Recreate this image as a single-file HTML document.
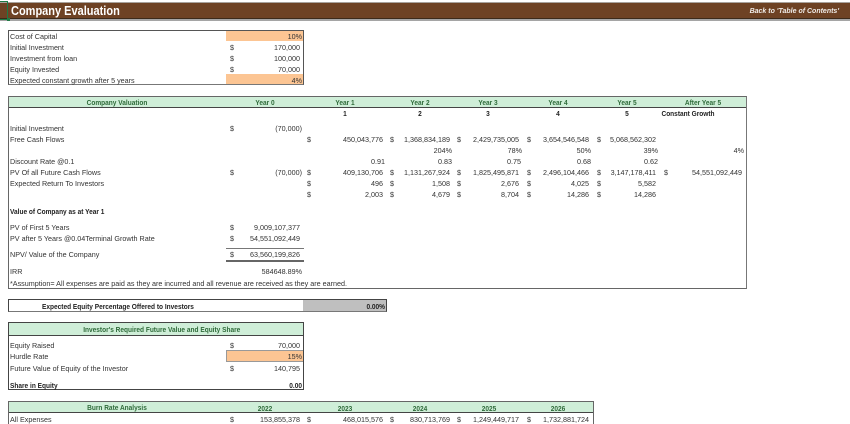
<!DOCTYPE html>
<html><head><meta charset="utf-8"><style>
html,body{margin:0;padding:0;background:#fff}
#p{position:relative;width:850px;height:424px;overflow:hidden;background:#fff;font-family:"Liberation Sans",sans-serif;font-size:7.2px;color:#333}
.t,.r,.c,.b{position:absolute;white-space:nowrap;line-height:10px;height:10px}
.r{text-align:right;width:100px}
.c{text-align:center;width:120px}
.b{background:none}
.g{color:#2f6b3a;font-weight:bold;font-size:7.2px;transform:scaleX(.91)}
.k{font-weight:bold;color:#222;font-size:7.2px;transform:scaleX(.91)}
.t.k{transform-origin:left center}
.r.k{transform-origin:right center}
.x{position:absolute;box-sizing:border-box}
#txt{position:absolute;left:0;top:1px;width:850px;height:424px;filter:blur(.3px)}
</style></head><body><div id="p">
<!-- title bar -->
<div class="x" style="left:0;top:2px;width:850px;height:1px;background:#a8a29c"></div>
<div class="x" style="left:0;top:3px;width:850px;height:15px;background:#6e4224"></div>
<div class="x" style="left:0;top:18px;width:850px;height:1px;background:#3d2a1a"></div>
<div class="x" style="left:0;top:19px;width:850px;height:2px;background:#a5a5a5"></div>
<div class="x" style="left:-2px;top:1px;width:10px;height:19px;border:1px solid #1f7a45"></div>
<div class="x" style="left:7px;top:18px;width:3px;height:3px;background:#1f7a45"></div>

<!-- box 1 -->
<div class="x" style="left:226px;top:30px;width:77px;height:11px;background:#fcc593"></div>
<div class="x" style="left:226px;top:74px;width:77px;height:11px;background:#fcc593"></div>
<div class="x" style="left:8px;top:30px;width:296px;height:55px;border:1px solid #555;border-bottom:1.5px solid #777"></div>

<!-- valuation box -->
<div class="x" style="left:8px;top:96px;width:739px;height:12px;background:#cfeed8;border-bottom:1px solid #444"></div>
<div class="x" style="left:8px;top:96px;width:739px;height:193px;border:1px solid #666;border-right:1.5px solid #777"></div>
<div class="x" style="left:226px;top:248px;width:78px;height:1px;background:#777"></div>
<div class="x" style="left:226px;top:260px;width:78px;height:2px;background:#666"></div>

<!-- equity box -->
<div class="x" style="left:303px;top:299px;width:84px;height:13px;background:#bfbfbf"></div>
<div class="x" style="left:8px;top:299px;width:379px;height:13px;border:1px solid #444;border-bottom:1.5px solid #777"></div>

<!-- investor box -->
<div class="x" style="left:8px;top:322px;width:296px;height:14px;background:#cfeed8;border-bottom:1px solid #444"></div>
<div class="x" style="left:226px;top:350px;width:78px;height:12px;background:#fcc593;border:1px solid #999"></div>
<div class="x" style="left:8px;top:322px;width:296px;height:68px;border:1px solid #444"></div>

<!-- burn box -->
<div class="x" style="left:8px;top:401px;width:585px;height:12px;background:#cfeed8;border-bottom:1px solid #444"></div>
<div class="x" style="left:8px;top:401px;width:586px;height:30px;border:1px solid #666"></div>

<div id="txt">
<div class="t" style="left:11px;top:4px;font-size:12.5px;line-height:13px;height:13px;font-weight:bold;color:#fff;transform:scaleX(.88);transform-origin:left center">Company Evaluation</div>
<div class="r" style="left:739px;top:6px;font-size:7px;font-weight:bold;font-style:italic;color:#f0ece8">Back to 'Table of Contents'</div>

<div class="t" style="left:10px;top:31px">Cost of Capital</div><div class="r" style="left:202px;top:31px">10%</div>
<div class="t" style="left:10px;top:42px">Initial Investment</div><div class="t" style="left:230px;top:42px">$</div><div class="r" style="left:200px;top:42px">170,000</div>
<div class="t" style="left:10px;top:53px">Investment from loan</div><div class="t" style="left:230px;top:53px">$</div><div class="r" style="left:200px;top:53px">100,000</div>
<div class="t" style="left:10px;top:64px">Equity Invested</div><div class="t" style="left:230px;top:64px">$</div><div class="r" style="left:200px;top:64px">70,000</div>
<div class="t" style="left:10px;top:75px">Expected constant growth after 5 years</div><div class="r" style="left:202px;top:75px">4%</div>

<div class="c g" style="left:57px;top:97px">Company Valuation</div>
<div class="c g" style="left:205px;top:97px">Year 0</div>
<div class="c g" style="left:285px;top:97px">Year 1</div>
<div class="c g" style="left:360px;top:97px">Year 2</div>
<div class="c g" style="left:428px;top:97px">Year 3</div>
<div class="c g" style="left:498px;top:97px">Year 4</div>
<div class="c g" style="left:567px;top:97px">Year 5</div>
<div class="c g" style="left:643px;top:97px">After Year 5</div>

<div class="c k" style="left:285px;top:108px">1</div>
<div class="c k" style="left:360px;top:108px">2</div>
<div class="c k" style="left:428px;top:108px">3</div>
<div class="c k" style="left:498px;top:108px">4</div>
<div class="c k" style="left:567px;top:108px">5</div>
<div class="c k" style="left:628px;top:108px">Constant Growth</div>

<div class="t" style="left:10px;top:123px">Initial Investment</div><div class="t" style="left:230px;top:123px">$</div><div class="r" style="left:202px;top:123px">(70,000)</div>

<div class="t" style="left:10px;top:134px">Free Cash Flows</div>
<div class="t" style="left:307px;top:134px">$</div><div class="r" style="left:283px;top:134px">450,043,776</div>
<div class="t" style="left:390px;top:134px">$</div><div class="r" style="left:350px;top:134px">1,368,834,189</div>
<div class="t" style="left:457px;top:134px">$</div><div class="r" style="left:419px;top:134px">2,429,735,005</div>
<div class="t" style="left:527px;top:134px">$</div><div class="r" style="left:489px;top:134px">3,654,546,548</div>
<div class="t" style="left:597px;top:134px">$</div><div class="r" style="left:556px;top:134px">5,068,562,302</div>

<div class="r" style="left:352px;top:145px">204%</div>
<div class="r" style="left:422px;top:145px">78%</div>
<div class="r" style="left:491px;top:145px">50%</div>
<div class="r" style="left:558px;top:145px">39%</div>
<div class="r" style="left:644px;top:145px">4%</div>

<div class="t" style="left:10px;top:156px">Discount Rate @0.1</div>
<div class="r" style="left:285px;top:156px">0.91</div>
<div class="r" style="left:352px;top:156px">0.83</div>
<div class="r" style="left:421px;top:156px">0.75</div>
<div class="r" style="left:491px;top:156px">0.68</div>
<div class="r" style="left:558px;top:156px">0.62</div>

<div class="t" style="left:10px;top:167px">PV Of all Future Cash Flows</div>
<div class="t" style="left:230px;top:167px">$</div><div class="r" style="left:202px;top:167px">(70,000)</div>
<div class="t" style="left:307px;top:167px">$</div><div class="r" style="left:283px;top:167px">409,130,706</div>
<div class="t" style="left:390px;top:167px">$</div><div class="r" style="left:350px;top:167px">1,131,267,924</div>
<div class="t" style="left:457px;top:167px">$</div><div class="r" style="left:419px;top:167px">1,825,495,871</div>
<div class="t" style="left:527px;top:167px">$</div><div class="r" style="left:489px;top:167px">2,496,104,466</div>
<div class="t" style="left:597px;top:167px">$</div><div class="r" style="left:556px;top:167px">3,147,178,411</div>
<div class="t" style="left:664px;top:167px">$</div><div class="r" style="left:642px;top:167px">54,551,092,449</div>

<div class="t" style="left:10px;top:178px">Expected Return To Investors</div>
<div class="t" style="left:307px;top:178px">$</div><div class="r" style="left:283px;top:178px">496</div>
<div class="t" style="left:390px;top:178px">$</div><div class="r" style="left:350px;top:178px">1,508</div>
<div class="t" style="left:457px;top:178px">$</div><div class="r" style="left:419px;top:178px">2,676</div>
<div class="t" style="left:527px;top:178px">$</div><div class="r" style="left:489px;top:178px">4,025</div>
<div class="t" style="left:597px;top:178px">$</div><div class="r" style="left:556px;top:178px">5,582</div>

<div class="t" style="left:307px;top:189px">$</div><div class="r" style="left:283px;top:189px">2,003</div>
<div class="t" style="left:390px;top:189px">$</div><div class="r" style="left:350px;top:189px">4,679</div>
<div class="t" style="left:457px;top:189px">$</div><div class="r" style="left:419px;top:189px">8,704</div>
<div class="t" style="left:527px;top:189px">$</div><div class="r" style="left:489px;top:189px">14,286</div>
<div class="t" style="left:597px;top:189px">$</div><div class="r" style="left:556px;top:189px">14,286</div>

<div class="t k" style="left:10px;top:206px">Value of Company as at Year 1</div>
<div class="t" style="left:10px;top:222px">PV of First 5 Years</div><div class="t" style="left:230px;top:222px">$</div><div class="r" style="left:200px;top:222px">9,009,107,377</div>
<div class="t" style="left:10px;top:233px">PV after 5 Years @0.04Terminal Growth Rate</div><div class="t" style="left:230px;top:233px">$</div><div class="r" style="left:200px;top:233px">54,551,092,449</div>
<div class="t" style="left:10px;top:249px">NPV/ Value of the Company</div><div class="t" style="left:230px;top:249px">$</div><div class="r" style="left:200px;top:249px">63,560,199,826</div>
<div class="t" style="left:10px;top:266px">IRR</div><div class="r" style="left:202px;top:266px">584648.89%</div>
<div class="t" style="left:10px;top:278px">*Assumption= All expenses are paid as they are incurred and all revenue are received as they are earned.</div>

<div class="t k" style="left:42px;top:301px">Expected Equity Percentage Offered to Investors</div><div class="r k" style="left:285px;top:301px">0.00%</div>

<div class="c g" style="left:76px;top:324px;width:160px">Investor's Required Future Value and Equity Share</div>
<div class="t" style="left:10px;top:340px">Equity Raised</div><div class="t" style="left:230px;top:340px">$</div><div class="r" style="left:200px;top:340px">70,000</div>
<div class="t" style="left:10px;top:351px">Hurdle Rate</div><div class="r" style="left:202px;top:351px">15%</div>
<div class="t" style="left:10px;top:363px">Future Value of Equity of the Investor</div><div class="t" style="left:230px;top:363px">$</div><div class="r" style="left:200px;top:363px">140,795</div>
<div class="t k" style="left:10px;top:380px">Share in Equity</div><div class="r k" style="left:202px;top:380px">0.00</div>

<div class="c g" style="left:57px;top:402px">Burn Rate Analysis</div>
<div class="c g" style="left:205px;top:403px">2022</div>
<div class="c g" style="left:285px;top:403px">2023</div>
<div class="c g" style="left:360px;top:403px">2024</div>
<div class="c g" style="left:429px;top:403px">2025</div>
<div class="c g" style="left:498px;top:403px">2026</div>
<div class="t" style="left:10px;top:414px">All Expenses</div>
<div class="t" style="left:230px;top:414px">$</div><div class="r" style="left:200px;top:414px">153,855,378</div>
<div class="t" style="left:307px;top:414px">$</div><div class="r" style="left:283px;top:414px">468,015,576</div>
<div class="t" style="left:390px;top:414px">$</div><div class="r" style="left:350px;top:414px">830,713,769</div>
<div class="t" style="left:457px;top:414px">$</div><div class="r" style="left:419px;top:414px">1,249,449,717</div>
<div class="t" style="left:527px;top:414px">$</div><div class="r" style="left:489px;top:414px">1,732,881,724</div>
</div>
</div></body></html>
